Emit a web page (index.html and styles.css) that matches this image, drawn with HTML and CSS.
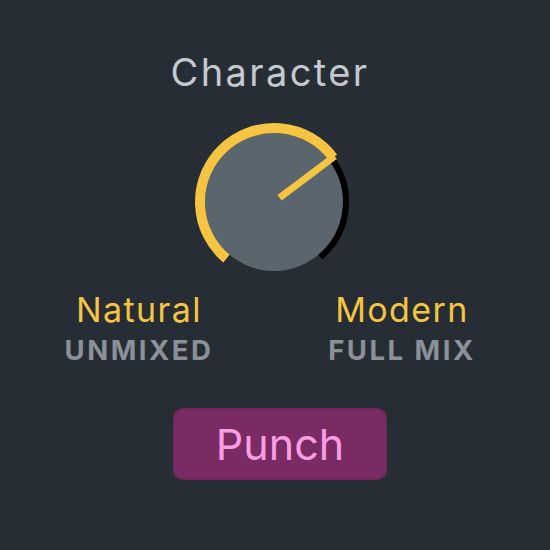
FILE: index.html
```html
<!DOCTYPE html>
<html>
<head>
<meta charset="utf-8">
<link rel="stylesheet" href="styles.css">
</head>
<body>
<main class="panel">
  <h1 class="title">Character</h1>
  <svg class="knob" width="170" height="170" viewBox="0 0 170 170">
    <circle cx="84" cy="85" r="69" fill="#5b656e"/>
    <path d="M141.50 41.67 A72 72 0 0 1 130.28 140.15" fill="none" stroke="#000" stroke-width="6"/>
    <path d="M36.43 141.69 A74 74 0 1 1 143.10 40.47" fill="none" stroke="#f5c443" stroke-width="10"/>
    <line x1="89.59" y1="80.79" x2="144.69" y2="39.26" stroke="#f5c443" stroke-width="7"/>
  </svg>
  <div class="labels">
    <div class="label">
      <span class="main">Natural</span>
      <span class="sub">UNMIXED</span>
    </div>
    <div class="label">
      <span class="main">Modern</span>
      <span class="sub">FULL MIX</span>
    </div>
  </div>
  <button class="punch">Punch</button>
</main>
</body>
</html>
```

FILE: styles.css
```css
html, body {
  margin: 0;
  padding: 0;
  background: #262d34;
  width: 550px;
  height: 550px;
  overflow: hidden;
}
.panel {
  display: flex;
  flex-direction: column;
  align-items: center;
  font-family: Inter, "Liberation Sans", sans-serif;
  padding-top: 50px;
}
.title {
  margin: 0;
  font-size: 38px;
  font-weight: 400;
  line-height: 44px;
  letter-spacing: 2.4px;
  color: #c5c9ce;
  margin-left: -10px;
}
.knob {
  display: block;
  margin-top: 23px;
}
.labels {
  align-self: stretch;
  display: grid;
  grid-template-columns: 170px 170px;
  column-gap: 93px;
  padding-left: 54px;
  margin-top: 3px;
}
.label {
  display: flex;
  flex-direction: column;
  align-items: center;
}
.main {
  font-size: 34px;
  line-height: 40px;
  letter-spacing: 1.4px;
  color: #f5c443;
}
.sub {
  font-size: 27.5px;
  line-height: 32px;
  font-weight: 700;
  letter-spacing: 2.5px;
  color: #8b9199;
  margin-top: 4px;
}
.punch {
  margin-top: 42px;
  margin-left: 10px;
  width: 214px;
  height: 72px;
  border: none;
  border-radius: 10px;
  background: #7b2b63;
  box-shadow: inset 0 0 3px rgba(0,0,0,0.35);
  color: #f79fe2;
  font-family: Inter, "Liberation Sans", sans-serif;
  font-size: 43px;
  padding: 0;
}
```
